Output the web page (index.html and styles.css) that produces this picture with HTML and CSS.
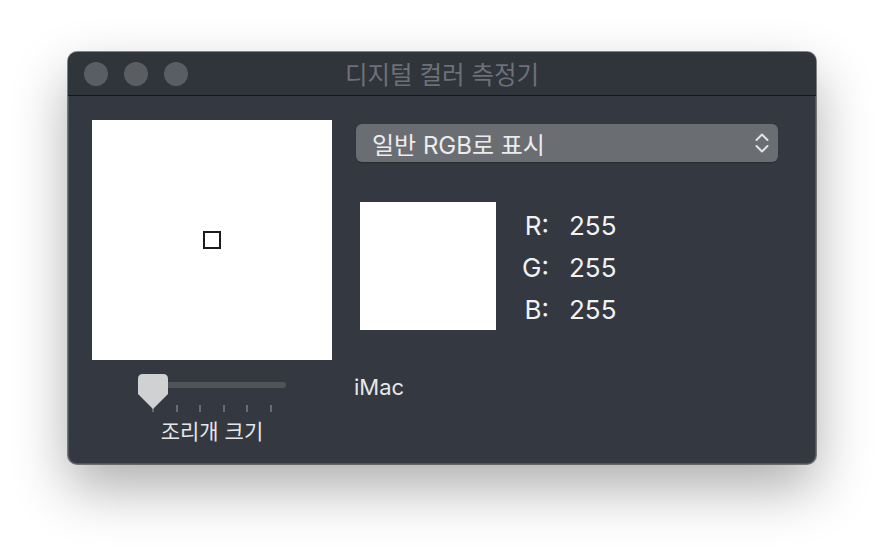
FILE: index.html
```html
<!DOCTYPE html>
<html lang="ko">
<head>
    <meta charset="UTF-8">
    <title>디지털 컬러 측정기</title>
    <link rel="stylesheet" href="styles.css">
</head>
<body>
    <div class="window">
        <div class="titlebar">
            <div class="lights">
                <span></span><span></span><span></span>
            </div>
            <div class="title">디지털 컬러 측정기</div>
        </div>

        <div class="content">
            <div class="left">
                <div class="preview">
                    <div class="aperture"></div>
                </div>

                <div class="slider">
                    <div class="track"></div>
                    <div class="ticks">
                        <i></i><i></i><i></i><i></i><i></i><i></i>
                    </div>
                    <svg class="knob" width="30" height="35" viewBox="0 0 30 35">
                        <path d="M5 0 H25 Q30 0 30 5 V20 L15 35 L0 20 V5 Q0 0 5 0 Z" fill="#d0d1d3"/>
                    </svg>
                </div>
                <div class="slider-label">조리개 크기</div>
            </div>

            <div class="right">
                <div class="popup">
                    <span>일반 RGB로 표시</span>
                    <svg class="chevrons" width="16" height="24" viewBox="0 0 16 24">
                        <path d="M2.5 9 L8 3.5 L13.5 9" fill="none" stroke="#e2e3e4" stroke-width="2" stroke-linecap="round" stroke-linejoin="round"/>
                        <path d="M2.5 15 L8 20.5 L13.5 15" fill="none" stroke="#e2e3e4" stroke-width="2" stroke-linecap="round" stroke-linejoin="round"/>
                    </svg>
                </div>

                <div class="readout">
                    <div class="swatch"></div>
                    <div class="values">
                        <div class="label">R:</div><div class="value">255</div>
                        <div class="label">G:</div><div class="value">255</div>
                        <div class="label">B:</div><div class="value">255</div>
                    </div>
                </div>

                <div class="device">iMac</div>
            </div>
        </div>
    </div>
</body>
</html>
```

FILE: styles.css
```css
html, body {
    height: 100%;
}

body {
    margin: 0;
    padding-top: 52px;
    box-sizing: border-box;
    background: #ffffff;
    font-family: "Inter", "Noto Sans CJK KR", sans-serif;
}

.window {
    margin-left: 68px;
    width: 748px;
    height: 412px;
    border-radius: 9px;
    overflow: hidden;
    background: #343840;
    box-shadow: 0 24px 55px rgba(0,0,0,0.32), 0 0 0 1px rgba(0,0,0,0.45), inset 0 0 0 1px rgba(255,255,255,0.14);
}

.titlebar {
    height: 43px;
    display: grid;
    grid-template-columns: 1fr auto 1fr;
    align-items: center;
    background: #30343b;
    border-bottom: 1px solid #141619;
}

.lights {
    display: flex;
    gap: 16px;
    padding-left: 16px;
}

.lights span {
    width: 24px;
    height: 24px;
    border-radius: 50%;
    background: #5a5e62;
}

.title {
    font-size: 24.5px;
    color: #6d7177;
}

.content {
    display: flex;
    gap: 24px;
    padding: 24px 38px 0 24px;
}

.left {
    width: 240px;
    display: flex;
    flex-direction: column;
    align-items: center;
}

.preview {
    width: 240px;
    height: 240px;
    background: #ffffff;
    display: flex;
    align-items: center;
    justify-content: center;
}

.aperture {
    width: 14px;
    height: 14px;
    border: 2.5px solid #1c1c1c;
}

.slider {
    position: relative;
    width: 148px;
    height: 38px;
    margin-top: 14px;
}

.track {
    margin-top: 8px;
    height: 6px;
    border-radius: 3px;
    background: #4f5459;
}

.ticks {
    display: flex;
    justify-content: space-between;
    margin-top: 17px;
    padding: 0 14px;
}

.ticks i {
    width: 2px;
    height: 7px;
    background: #686c71;
}

.knob {
    position: absolute;
    top: 0;
    left: 0;
}

.slider-label {
    margin-top: 7px;
    font-size: 21px;
    line-height: 26px;
    color: #e6e7e8;
}

.right {
    flex: 1;
}

.popup {
    margin-top: 4px;
    height: 38px;
    border-radius: 6px;
    background: #6a6e73;
    display: flex;
    align-items: center;
    justify-content: space-between;
    padding: 0 8px 0 16px;
    color: #ececec;
    font-size: 24px;
    box-shadow: 0 1px 1px rgba(0,0,0,0.25);
}

.readout {
    display: flex;
    margin-top: 40px;
    margin-left: 4px;
}

.swatch {
    width: 136px;
    height: 128px;
    background: #ffffff;
}

.values {
    display: grid;
    grid-template-columns: 40px auto;
    column-gap: 20px;
    grid-auto-rows: 42px;
    align-items: center;
    margin-left: 13px;
    margin-top: 2px;
    color: #f2f2f2;
    font-size: 26px;
}

.label {
    text-align: right;
}

.device {
    margin-top: 44px;
    margin-left: -2px;
    font-size: 22px;
    line-height: 26px;
    color: #e6e7e8;
}
```
